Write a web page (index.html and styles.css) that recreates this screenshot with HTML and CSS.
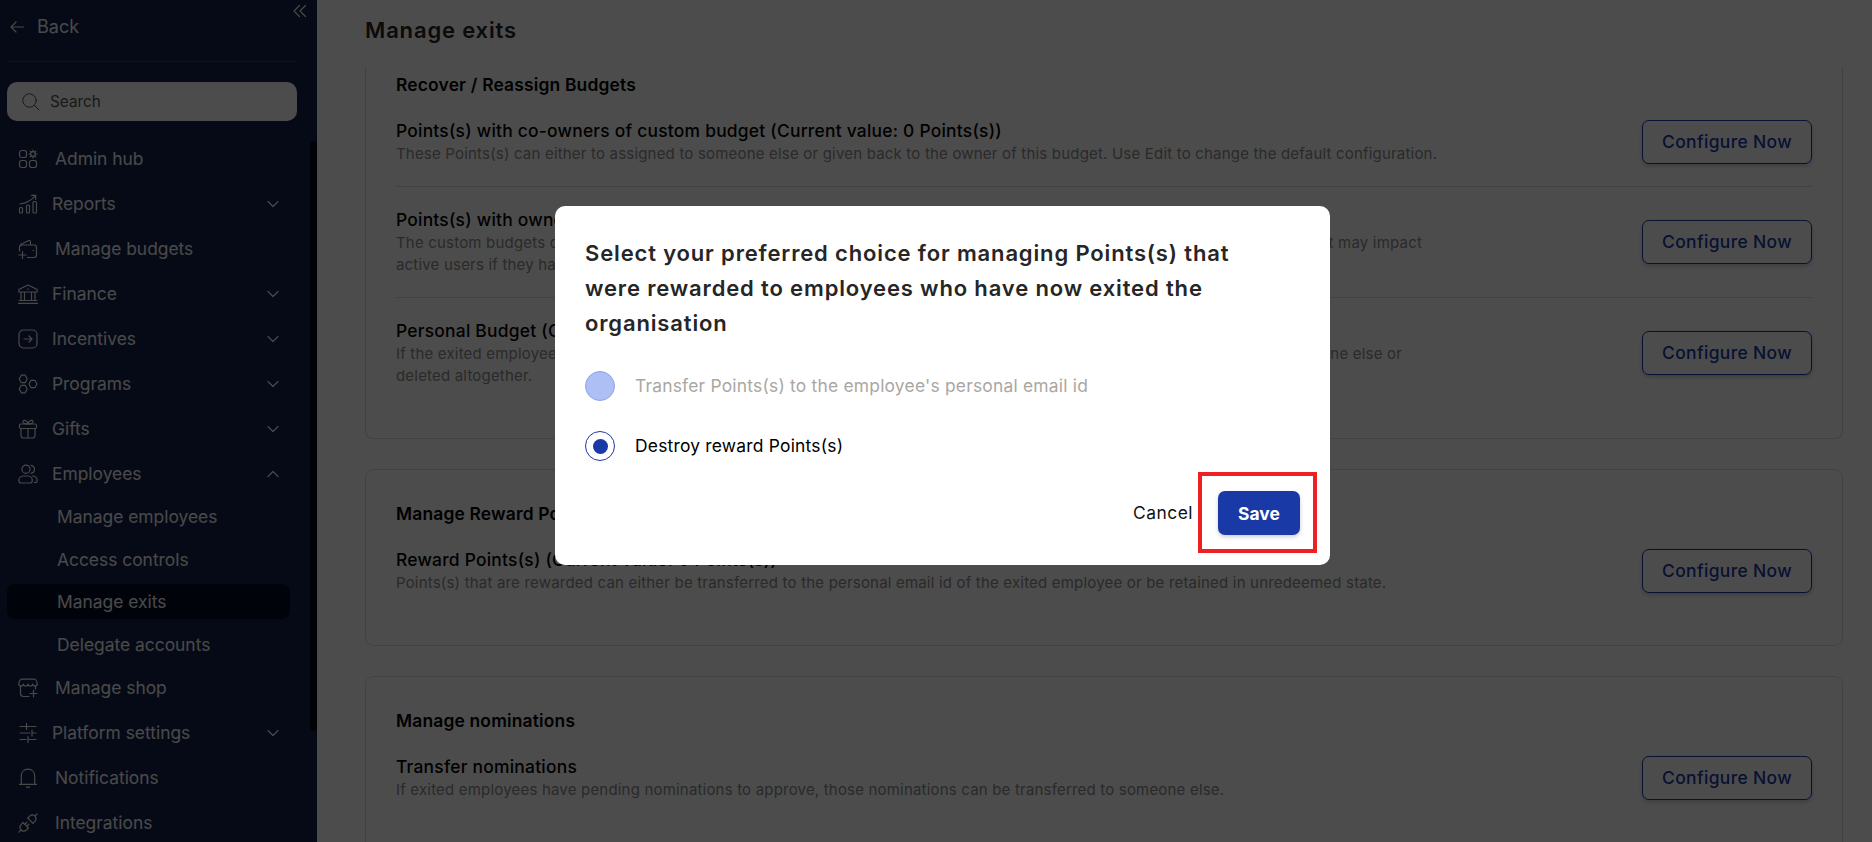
FILE: index.html
```html
<!DOCTYPE html>
<html lang="en">
<head>
    <meta charset="UTF-8">
    <meta name="viewport" content="width=device-width, initial-scale=1.0">
    <title>Manage exits</title>
    <link rel="stylesheet" href="styles.css">
</head>
<body>
    <div class="page">
        <aside class="sidebar">
            <div class="sidebar-top">
                <a class="back">
                    <svg class="back-icon" viewBox="0 0 14 12"><path d="M13.5 6H1M6 1L1 6l5 5"/></svg>
                    <span>Back</span>
                </a>
                <svg class="collapse" viewBox="0 0 14 14"><path d="M6.5 1.5L1 7l5.500 5.500M12.500 1.500L7 7l5.500 5.500"/></svg>
            </div>
            <div class="search">
                <svg class="search-icon" viewBox="0 0 18 18"><circle cx="7.500" cy="7.500" r="6.700"/><path d="M12.300 12.300L17 17"/></svg>
                <span>Search</span>
            </div>
            <div class="nav-wrap">
                <nav class="nav">
                    <a class="nav-item plain">
                        <svg class="icon" viewBox="0 0 20 20"><rect x="1.500" y="1.500" width="7" height="7" rx="2.200"/><rect x="1.500" y="11.500" width="7" height="7" rx="2.200"/><rect x="11.500" y="11.500" width="7" height="7" rx="2.200"/><circle cx="15" cy="5" r="2.300"/><path d="M15 1v1.500M15 7.500V9M11 5h1.500M17.500 5H19M12.200 2.200l1 1M16.800 6.800l1 1M12.200 7.800l1-1M16.800 3.200l1-1"/></svg>
                        <span>Admin hub</span>
                    </a>
                    <a class="nav-item">
                        <svg class="icon" viewBox="0 0 20 20"><rect x="1.500" y="13.500" width="3" height="5.500" rx="1"/><rect x="8.500" y="11" width="3" height="8" rx="1"/><rect x="15" y="7.500" width="3.500" height="11.500" rx="1"/><path d="M2 10c6-.8 11-3.500 15.500-8.200M13.500 1.300h4.200v4"/></svg>
                        <span>Reports</span>
                        <svg class="chevron" viewBox="0 0 12 8"><path d="M1 1.500l5 5 5-5"/></svg>
                    </a>
                    <a class="nav-item plain">
                        <svg class="icon" viewBox="0 0 20 20"><path d="M1.500 12V8.500C1.500 6.800 2.500 6 4 6h12c1.700 0 2.500.9 2.500 2.500v7.500c0 1.700-.9 2.500-2.500 2.500H9.500M1.500 8c0-1.500.5-2.300 2-3l6.800-3.300c1.200-.6 2.200.1 2.200 1.300v3M4.500 12.500v7M1 16h7"/><path d="M15 11.500h.6"/></svg>
                        <span>Manage budgets</span>
                    </a>
                    <a class="nav-item">
                        <svg class="icon" viewBox="0 0 20 20"><path d="M.8 5.500L10 1l9.200 4.500V8H.8zM3 8v8.500M6.500 8v8.500M13.500 8v8.500M17 8v8.500M1 16.500h18M.5 19.300h19M10 4.800v.8"/></svg>
                        <span>Finance</span>
                        <svg class="chevron" viewBox="0 0 12 8"><path d="M1 1.500l5 5 5-5"/></svg>
                    </a>
                    <a class="nav-item">
                        <svg class="icon" viewBox="0 0 20 20"><rect x="1" y="1" width="18" height="18" rx="4.500"/><path d="M6 10h8M11 7l3 3-3 3"/></svg>
                        <span>Incentives</span>
                        <svg class="chevron" viewBox="0 0 12 8"><path d="M1 1.500l5 5 5-5"/></svg>
                    </a>
                    <a class="nav-item">
                        <svg class="icon" viewBox="0 0 20 20"><path d="M3.300 1.200h3.900L9.200 5 7.200 8.700H3.300L1.200 5zM3.300 11.300h3.900l2 3.700-2 3.800H3.300L1.200 15zM13 6.300h3.900L19 10l-2.100 3.700H13L11 10z"/></svg>
                        <span>Programs</span>
                        <svg class="chevron" viewBox="0 0 12 8"><path d="M1 1.500l5 5 5-5"/></svg>
                    </a>
                    <a class="nav-item">
                        <svg class="icon" viewBox="0 0 20 20"><rect x="1.500" y="5" width="17" height="4.500" rx="1.200"/><path d="M3 9.500v7c0 1.700.9 2.500 2.500 2.500h9c1.600 0 2.500-.8 2.500-2.500v-7M10 9.500V19M10 5C8 5 5 4.200 5 2.500S9 .5 10 4.500c1-4 5-3.700 5-2S12 5 10 5z"/></svg>
                        <span>Gifts</span>
                        <svg class="chevron" viewBox="0 0 12 8"><path d="M1 1.500l5 5 5-5"/></svg>
                    </a>
                    <a class="nav-item">
                        <svg class="icon" viewBox="0 0 20 20"><circle cx="8" cy="5.300" r="4.100"/><path d="M13 1.300a4.100 4.100 0 0 1 0 8.100M.8 16.500c0-2.600 2.200-4.500 4.700-4.500h4.500c2.600 0 4.300 2 4.300 4.500 0 1.500-.8 2.500-2.300 2.500H3c-1.400 0-2.200-1-2.200-2.500zM14.500 12c2.700 0 4.700 1.800 4.700 4.200 0 1.400-.8 2.300-2 2.300h-1"/></svg>
                        <span>Employees</span>
                        <svg class="chevron" viewBox="0 0 12 8"><path d="M1 6.500l5-5 5 5"/></svg>
                    </a>
                    <div class="subnav">
                        <a class="subnav-item"><span>Manage employees</span></a>
                        <a class="subnav-item"><span>Access controls</span></a>
                        <a class="subnav-item active"><span>Manage exits</span></a>
                        <a class="subnav-item"><span>Delegate accounts</span></a>
                    </div>
                    <a class="nav-item plain">
                        <svg class="icon" viewBox="0 0 20 20"><path d="M2.500 8.500v7c0 2 1 3 3 3H11M17.500 8.500v2.500M4 1.200h12c2 0 3.200 2.500 3.200 4.800 0 1-1 2-2.200 2s-2.300-.8-2.300-2c0 1.200-1.100 2-2.300 2S10 7.200 10 6c0 1.200-1.200 2-2.400 2S5.300 7.200 5.300 6c0 1.200-1.100 2-2.300 2S.8 7 .8 6C.8 3.700 2 1.200 4 1.200zM15.500 12v7M12 15.500h7"/></svg>
                        <span>Manage shop</span>
                    </a>
                    <a class="nav-item">
                        <svg class="icon" viewBox="0 0 20 20"><path d="M2 3.500h5.500M8.500.5v6M8.500 3.500H18M2 10h10M14 7v6M14 10h4M2 16.500h6M10 13.500v6M10 16.500h8"/></svg>
                        <span>Platform settings</span>
                        <svg class="chevron" viewBox="0 0 12 8"><path d="M1 1.500l5 5 5-5"/></svg>
                    </a>
                    <a class="nav-item plain">
                        <svg class="icon" viewBox="0 0 20 20"><path d="M1.500 16.300h17M3.300 16.300V7.800C3.300 4 6 1.200 10 1.200s6.700 2.800 6.700 6.600v8.500M8.500 19c1 .6 2 .6 3 0"/></svg>
                        <span>Notifications</span>
                    </a>
                    <a class="nav-item plain">
                        <svg class="icon" viewBox="0 0 20 20"><path d="M.8 19.200l2.400-2.400M16.800 3.200L19.200.8M5 9.500l5.500 5.500-2 2c-1.600 1.500-4 1.500-5.300 0-1.500-1.500-1.500-3.700 0-5.300zM9.700 5l5.300 5.300 1.900-2c1.500-1.500 1.500-3.800 0-5.200-1.500-1.400-3.700-1.400-5.200 0zM7 11.200l2-2M9 13.200l2-2"/></svg>
                        <span>Integrations</span>
                    </a>
                </nav>
                <div class="scroll-thumb"></div>
            </div>
        </aside>

        <main class="main">
            <h1 class="page-title">Manage exits</h1>

            <section class="card scrolled">
                <h2>Recover / Reassign Budgets</h2>
                <div class="setting">
                    <div class="setting-text">
                        <h3>Points(s) with co-owners of custom budget (Current value: 0 Points(s))</h3>
                        <p>These Points(s) can either to assigned to someone else or given back to the owner of this budget. Use Edit to change the default configuration.</p>
                    </div>
                    <button class="btn-outline">Configure Now</button>
                </div>
                <div class="setting">
                    <div class="setting-text">
                        <h3>Points(s) with owners of custom budget</h3>
                        <p class="budget-note"><span>The custom budgets owned by the exited employee</span><span>it may impact</span></p>
                        <p>active users if they have access.</p>
                    </div>
                    <button class="btn-outline">Configure Now</button>
                </div>
                <div class="setting">
                    <div class="setting-text">
                        <h3>Personal Budget (Current value: 0 Points(s))</h3>
                        <p class="budget-note personal"><span>If the exited employee has a personal budget</span><span>someone else or</span></p>
                        <p>deleted altogether.</p>
                    </div>
                    <button class="btn-outline">Configure Now</button>
                </div>
            </section>

            <section class="card">
                <h2>Manage Reward Points(s)</h2>
                <div class="setting">
                    <div class="setting-text">
                        <h3>Reward Points(s) (Current value: 0 Points(s))</h3>
                        <p>Points(s) that are rewarded can either be transferred to the personal email id of the exited employee or be retained in unredeemed state.</p>
                    </div>
                    <button class="btn-outline">Configure Now</button>
                </div>
            </section>

            <section class="card">
                <h2>Manage nominations</h2>
                <div class="setting">
                    <div class="setting-text">
                        <h3>Transfer nominations</h3>
                        <p>If exited employees have pending nominations to approve, those nominations can be transferred to someone else.</p>
                    </div>
                    <button class="btn-outline">Configure Now</button>
                </div>
            </section>
        </main>
    </div>

    <div class="overlay">
        <div class="modal">
            <h2>Select your preferred choice for managing Points(s) that were rewarded to employees who have now exited the organisation</h2>
            <label class="choice disabled">
                <span class="radio"></span>
                <span>Transfer Points(s) to the employee's personal email id</span>
            </label>
            <label class="choice selected">
                <span class="radio"></span>
                <span>Destroy reward Points(s)</span>
            </label>
            <div class="actions">
                <button class="btn-text">Cancel</button>
                <div class="highlight">
                    <button class="btn-primary">Save</button>
                </div>
            </div>
        </div>
    </div>
</body>
</html>
```
FILE: styles.css
```css
* {
    box-sizing: border-box;
}

body {
    font-family: Inter, "Liberation Sans", sans-serif;
    margin: 0;
    height: 842px;
    overflow: hidden;
    background: #fff;
    color: #000;
}

h1, h2, h3, p {
    margin: 0;
}

button {
    font-family: inherit;
    font-size: 17.4px;
    padding: 0;
    border: none;
    cursor: pointer;
}

svg {
    fill: none;
    stroke: currentColor;
    stroke-linecap: round;
    stroke-linejoin: round;
    flex-shrink: 0;
}

.page {
    display: flex;
    height: 842px;
    overflow: hidden;
}

/* sidebar */
.sidebar {
    width: 317px;
    flex-shrink: 0;
    background: #14204a;
    color: #f5f5f5;
    font-size: 17.4px;
}

.sidebar-top {
    display: flex;
    justify-content: space-between;
    height: 62px;
    margin: 0 20px 0 7px;
    border-bottom: 1px solid #2f3c62;
}

.back {
    display: flex;
    align-items: center;
    gap: 13px;
    height: 53px;
    padding-left: 3px;
    font-size: 18px;
}

.back-icon {
    width: 14px;
    height: 12px;
    stroke-width: 1.2;
}

.collapse {
    width: 14px;
    height: 14px;
    margin: 4px -10px 0 0;
    stroke-width: 1.2;
}

.search {
    display: flex;
    align-items: center;
    gap: 10px;
    width: 290px;
    height: 39px;
    margin: 20px 0 0 7px;
    padding-left: 15px;
    border-radius: 10px;
    background: #fff;
    color: #555;
    font-size: 15.3px;
}

.search-icon {
    width: 18px;
    height: 18px;
}

.nav-wrap {
    display: flex;
    justify-content: space-between;
    margin-top: 15px;
}

.nav {
    width: 290px;
    padding-left: 7px;
}

.nav-item {
    display: flex;
    align-items: center;
    height: 45px;
    padding: 0 11px;
    gap: 14px;
}

.nav-item.plain {
    gap: 17px;
}

.icon {
    width: 20px;
    height: 20px;
    stroke-width: 1.2;
}

.chevron {
    width: 12px;
    height: 8px;
    margin-left: auto;
    stroke-width: 1.2;
}

.subnav {
    margin: -1px 0 0;
    padding-top: 4px;
    height: 170px;
}

.subnav-item {
    display: flex;
    align-items: center;
    height: 35px;
    margin-bottom: 7.5px;
    padding-left: 50px;
    border-radius: 8px;
}

.subnav-item.active {
    background: #050d24;
}

.scroll-thumb {
    width: 7px;
    height: 590px;
    margin-top: 5px;
    border-radius: 4px;
    background: #060a18;
}

/* content */
.main {
    flex: 1;
    padding: 0 29px 0 48px;
}

.page-title {
    height: 67px;
    line-height: 60px;
    font-size: 22px;
    font-weight: 600;
    letter-spacing: 0.84px;
    color: #262626;
}

.card {
    margin-bottom: 30px;
    padding: 30px;
    border: 1px solid #dcdcdc;
    border-radius: 8px;
}

.card h2 {
    line-height: 27px;
    font-size: 17.4px;
    font-weight: 600;
    letter-spacing: 0.19px;
}

.card.scrolled {
    padding-top: 4px;
    border-top: none;
    border-radius: 0 0 8px 8px;
}

.card.scrolled h2 {
    margin-bottom: -0.5px;
}

.setting {
    display: flex;
    align-items: center;
    justify-content: space-between;
    padding: 21px 0;
    border-bottom: 1px solid #dcdcdc;
}

.setting:last-child {
    border-bottom: none;
}

.setting h3 {
    line-height: 24px;
    font-size: 17.4px;
    font-weight: 450;
    letter-spacing: 0.24px;
    white-space: nowrap;
}

.setting p {
    line-height: 22px;
    font-size: 15px;
    letter-spacing: 0.19px;
    color: #8c8c8c;
    white-space: nowrap;
}

.budget-note {
    display: flex;
    justify-content: space-between;
    width: 1026px;
}

.budget-note.personal {
    width: 1006px;
}

.btn-outline {
    width: 170px;
    height: 44px;
    border: 1px solid #1939a7;
    border-radius: 7px;
    background: #fff;
    color: #1939a7;
    font-weight: 450;
    letter-spacing: 0.38px;
    box-shadow: 0 2px 4px rgba(0, 0, 0, 0.2);
}

/* modal */
.overlay {
    position: fixed;
    inset: 0;
    background: rgba(0, 0, 0, 0.7);
    padding: 206px 0 0 555px;
}

.modal {
    width: 775px;
    height: 359px;
    padding: 30px 13px 0 30px;
    border-radius: 10px;
    background: #fff;
}

.modal h2 {
    width: 690px;
    margin-bottom: 30px;
    line-height: 35px;
    font-size: 22px;
    font-weight: 600;
    letter-spacing: 0.85px;
    color: #262626;
}

.choice {
    display: flex;
    align-items: center;
    gap: 20px;
    height: 30px;
    margin-bottom: 30px;
    font-size: 17.4px;
    line-height: 20px;
    letter-spacing: 0.22px;
}

.choice.disabled {
    color: #aaa7a3;
}

.radio {
    display: flex;
    align-items: center;
    justify-content: center;
    width: 30px;
    height: 30px;
    border: 1px solid #1939a7;
    border-radius: 50%;
}

.disabled .radio {
    border-color: #8da3ee;
    background: #adbff5;
}

.selected .radio::after {
    content: "";
    width: 15px;
    height: 15px;
    border-radius: 50%;
    background: #1939a7;
}

.actions {
    display: flex;
    justify-content: flex-end;
    align-items: center;
    gap: 5px;
    margin-top: -19px;
}

.btn-text {
    background: none;
    color: #111;
    letter-spacing: 0.5px;
}

.highlight {
    width: 119px;
    height: 81px;
    padding: 15px 0 0 12px;
    border: 4px solid #ee2024;
}

.btn-primary {
    display: block;
    width: 82px;
    height: 44px;
    margin-left: 4px;
    border-radius: 7px;
    background: #1939a7;
    color: #fff;
    font-weight: 700;
    letter-spacing: 0.1px;
    box-shadow: 0 2px 4px rgba(0, 0, 0, 0.2);
}
```
